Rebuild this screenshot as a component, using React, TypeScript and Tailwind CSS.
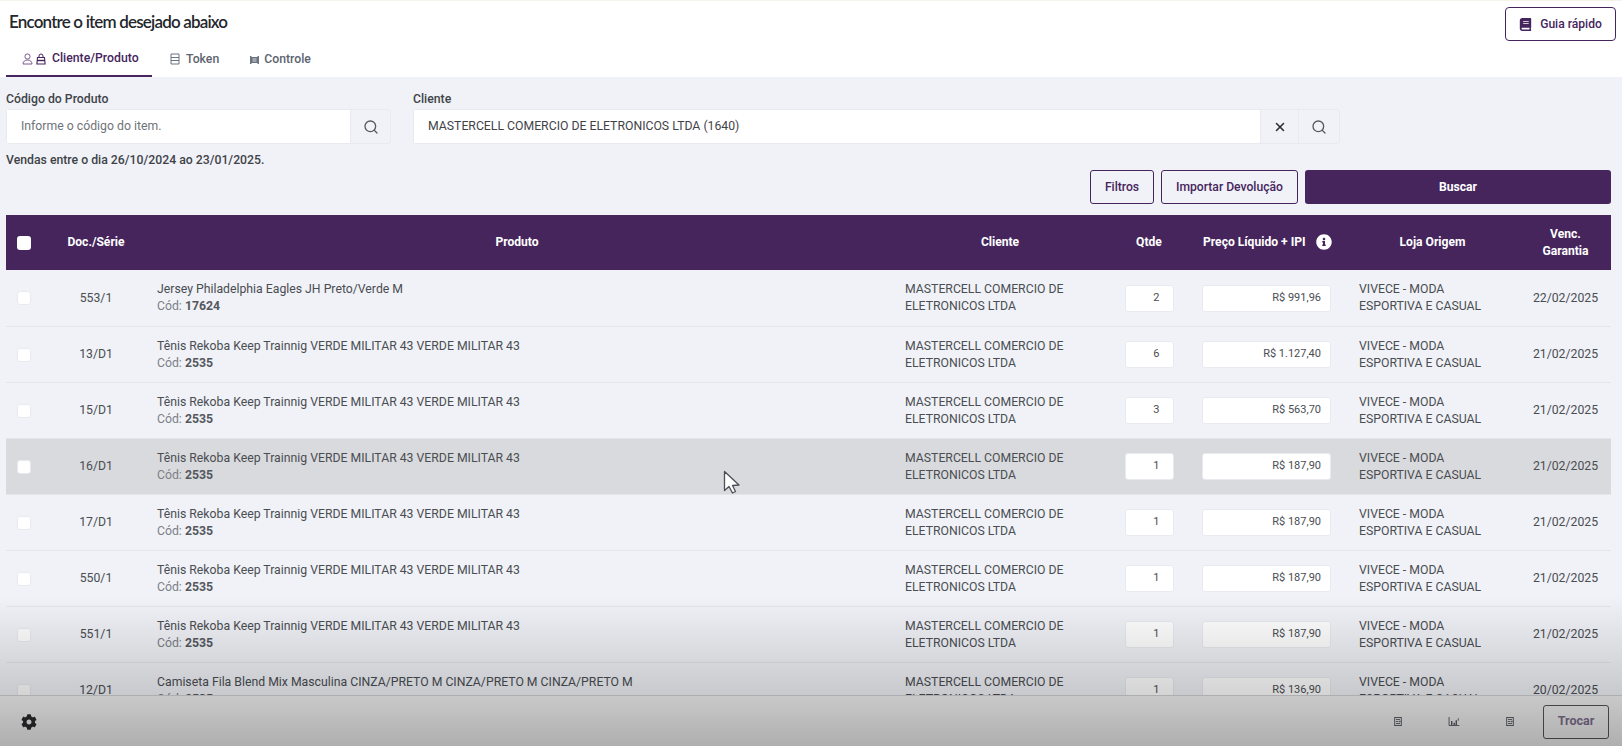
import { FaBook, FaCog, FaInfoCircle } from "react-icons/fa";
import { Search, X } from "lucide-react";

const cols = "grid grid-cols-[36px_108px_734px_232px_66px_168px_165px_96px] items-center";
const tenis = "Tênis Rekoba Keep Trainnig VERDE MILITAR 43 VERDE MILITAR 43";

const rows = [
  { doc: "553/1", name: "Jersey Philadelphia Eagles JH Preto/Verde M", cod: "17624", q: "2", price: "R$ 991,96", date: "22/02/2025" },
  { doc: "13/D1", name: tenis, cod: "2535", q: "6", price: "R$ 1.127,40", date: "21/02/2025" },
  { doc: "15/D1", name: tenis, cod: "2535", q: "3", price: "R$ 563,70", date: "21/02/2025" },
  { doc: "16/D1", name: tenis, cod: "2535", q: "1", price: "R$ 187,90", date: "21/02/2025", hover: true },
  { doc: "17/D1", name: tenis, cod: "2535", q: "1", price: "R$ 187,90", date: "21/02/2025" },
  { doc: "550/1", name: tenis, cod: "2535", q: "1", price: "R$ 187,90", date: "21/02/2025" },
  { doc: "551/1", name: tenis, cod: "2535", q: "1", price: "R$ 187,90", date: "21/02/2025" },
  { doc: "12/D1", name: "Camiseta Fila Blend Mix Masculina CINZA/PRETO M CINZA/PRETO M CINZA/PRETO M", cod: "2535", q: "1", price: "R$ 136,90", date: "20/02/2025" },
];

function UserBagIcon() {
  return (
    <svg width="24" height="12" viewBox="0 0 24 12" fill="none" className="shrink-0">
      <circle cx="5.5" cy="3.5" r="2.6" stroke="#7b5a94" strokeWidth="1" />
      <path d="M1 11c0-2.6 2-4 4.500-4S10 8.400 10 11z" stroke="#7b5a94" strokeWidth="1" />
      <path d="M15.500 4.500h7l.6 6.500h-8.200z" stroke="#46255d" strokeWidth="1.100" fill="#ffffff" />
      <path d="M17 5V3a2 2 0 0 1 4 0v2" stroke="#46255d" strokeWidth="1" />
      <path d="M15 7.500h8" stroke="#46255d" strokeWidth="1.400" />
    </svg>
  );
}

function ListIcon() {
  return (
    <svg width="10" height="12" viewBox="0 0 10 12" fill="none" className="shrink-0">
      <path d="M1 1h8M1 1v10h8V1M1 4.500h8M1 7.500h8" stroke="#6b7280" strokeWidth="1" />
    </svg>
  );
}

function ControlIcon() {
  return (
    <svg width="9" height="9" viewBox="0 0 9 9" className="shrink-0">
      <path d="M0 1h1.500v1H7.500V1H9v8H7.500V8h-6v1H0z" fill="#6b7280" />
      <rect x="2.500" y="3" width="4" height="4" fill="#a3a8b0" />
    </svg>
  );
}

function DocMini() {
  return (
    <svg width="8" height="9" viewBox="0 0 9 11" fill="none">
      <rect x="0.500" y="0.500" width="8" height="10" stroke="#3f444b" strokeWidth="1" />
      <path d="M2 3h5M2 5.500h3M2 8h5" stroke="#3f444b" strokeWidth="1" />
      <path d="M6 4.500h1.500v2H6z" fill="#3f444b" />
    </svg>
  );
}

function ChartMini() {
  return (
    <svg width="12" height="9" viewBox="0 0 13 11" fill="none">
      <path d="M0.500 0v10.500H13" stroke="#3f444b" strokeWidth="1" />
      <path d="M3 5h1.500v5H3zM6 7h1.500v3H6zM8.500 4H10v6H8.500z" fill="#3f444b" />
      <path d="M11 1.500h1.500v3H11z" fill="#7c828b" />
    </svg>
  );
}

function Cursor() {
  return (
    <svg width="18" height="24" viewBox="0 0 18 24" className="absolute left-[723px] top-[470px] z-20">
      <path d="M1.500 1.500v19l4.500-4 3.500 6.500 3-1.500-3-6 6.500-.5z" fill="#ffffff" stroke="#4b4f57" strokeWidth="1.300" strokeLinejoin="round" />
    </svg>
  );
}

export default function App() {
  return (
    <div className="relative h-screen w-full flex flex-col overflow-hidden bg-[#f0f2f7] font-['Roboto',sans-serif] text-[12.25px] text-[#4a4d52]">
      <header className="h-[77px] shrink-0 bg-white border-t border-[#f6f3ea] flex justify-between pl-[6px] pr-[6px]">
        <div className="flex flex-col">
          <h1 className="ml-[3px] mt-[9px] h-[24px] leading-[24px] font-['Lato',sans-serif] font-semibold text-[17px] tracking-[-0.82px] whitespace-nowrap text-[#24272c]">
            Encontre o item desejado abaixo
          </h1>
          <nav className="mt-[8px] flex h-[35px] text-[12.25px] font-medium">
            <div className="w-[146px] h-[35px] flex items-center pl-[16px] gap-[6px] border-b-2 border-[#46255d] text-[#46255d]">
              <UserBagIcon />
              <span>Cliente/Produto</span>
            </div>
            <div className="ml-[18px] flex items-center gap-[6px] text-[#5c6470] pb-[1px]">
              <ListIcon />
              <span>Token</span>
            </div>
            <div className="ml-[31px] flex items-center gap-[5px] text-[#5c6470] pb-[1px]">
              <ControlIcon />
              <span>Controle</span>
            </div>
          </nav>
        </div>
        <button className="mt-[6px] w-[111px] h-[34px] flex items-center justify-center gap-[8px] bg-white border border-[#46255d] rounded-[4px] text-[12.1px] font-medium text-[#46255d]">
          <FaBook className="text-[13px]" />
          <span>Guia rápido</span>
        </button>
      </header>

      <section className="shrink-0 px-[6px] pr-[11px] pt-[14px]">
        <div className="flex gap-[22px]">
          <div className="w-[385px]">
            <label className="block h-[17px] leading-[17px] mb-[1px] font-medium text-[#3f4348]">Código do Produto</label>
            <div className="flex h-[35px] rounded-[3px] border border-[#e8eaef]">
              <div className="flex-1 bg-white px-[14px] flex items-center text-[#6f7479]">Informe o código do item.</div>
              <div className="w-[40px] flex items-center justify-center border-l border-[#e8eaef] text-[#555a60]">
                <Search size={16} strokeWidth={2} />
              </div>
            </div>
          </div>
          <div className="w-[927px]">
            <label className="block h-[17px] leading-[17px] mb-[1px] font-medium text-[#3f4348]">Cliente</label>
            <div className="flex h-[35px] rounded-[3px] border border-[#e8eaef]">
              <div className="flex-1 bg-white px-[14px] flex items-center text-[#3f4348]">MASTERCELL COMERCIO DE ELETRONICOS LTDA (1640)</div>
              <div className="w-[38px] flex items-center justify-center border-l border-[#e8eaef] text-[#2b2e33]">
                <X size={14} strokeWidth={2.6} />
              </div>
              <div className="w-[41px] flex items-center justify-center border-l border-[#e8eaef] text-[#555a60]">
                <Search size={16} strokeWidth={2} />
              </div>
            </div>
          </div>
        </div>
        <p className="mt-[7px] mb-[1px] h-[18px] leading-[18px] font-medium text-[#3f4348]">Vendas entre o dia 26/10/2024 ao 23/01/2025.</p>
        <div className="flex justify-end gap-[7px] h-[34px] text-[12.15px]">
          <button className="w-[64px] border border-[#46255d] rounded-[3px] font-medium text-[#46255d]">Filtros</button>
          <button className="w-[137px] border border-[#46255d] rounded-[3px] font-medium text-[#46255d]">Importar Devolução</button>
          <button className="w-[306px] bg-[#46255d] rounded-[3px] font-bold text-white">Buscar</button>
        </div>
      </section>

      <main className="flex-1 min-h-0 overflow-hidden mt-[11px] ml-[6px] mr-[11px]">
        <div className={`${cols} h-[55px] mb-[1px] bg-[#46255d] text-white font-bold text-center text-[12.1px]`}>
          <div className="flex justify-center">
            <span className="w-[14px] h-[14px] rounded-[3px] bg-white" />
          </div>
          <div>Doc./Série</div>
          <div>Produto</div>
          <div>Cliente</div>
          <div>Qtde</div>
          <div className="flex items-center gap-[10px] pl-[21px]">
            <span className="whitespace-nowrap">Preço Líquido + IPI</span>
            <FaInfoCircle className="shrink-0 text-[16px]" />
          </div>
          <div>Loja Origem</div>
          <div className="leading-[17px] pl-[5px]">Venc.<br />Garantia</div>
        </div>
        {rows.map((r, i) => (
          <div key={r.doc} className={`${cols} h-[56px] border-b border-[#e3e5ea] ${i === 0 ? "pb-[2px]" : ""} ${r.hover ? "bg-[#d9dadd]" : ""}`}>
            <div className="flex justify-center">
              <span className="w-[14px] h-[14px] rounded-[3px] bg-white border border-[#e8eaef]" />
            </div>
            <div className={`text-center ${i === 0 ? "pt-[2px]" : ""}`}>{r.doc}</div>
            <div className="pl-[7px] leading-[17px]">
              <div>{r.name}</div>
              <div className="text-[#7c8086]">Cód: <b className="font-bold text-[#55585d]">{r.cod}</b></div>
            </div>
            <div className="pl-[21px] leading-[17px]">MASTERCELL COMERCIO DE<br />ELETRONICOS LTDA</div>
            <div className={`flex justify-center ${i === 0 ? "pt-[2px]" : ""}`}>
              <div className="w-[49px] h-[27px] bg-white border border-[#e8eaef] rounded-[3px] flex items-center justify-end pr-[13px] text-[11px]">{r.q}</div>
            </div>
            <div className={`pl-[20px] ${i === 0 ? "pt-[2px]" : ""}`}>
              <div className="w-[129px] h-[27px] bg-white border border-[#e8eaef] rounded-[3px] flex items-center justify-end pr-[9px] text-[11px]">{r.price}</div>
            </div>
            <div className="pl-[9px] leading-[17px]">VIVECE - MODA<br />ESPORTIVA E CASUAL</div>
            <div className={`text-center pl-[5px] ${i === 0 ? "pt-[2px]" : ""}`}>{r.date}</div>
          </div>
        ))}
      </main>

      <footer className="relative z-10 shrink-0 h-[51px] bg-[#f2f2f2] flex items-center pl-[21px] pr-[13px] pt-[1px] border-t border-[#d0d1d4]">
        <FaCog size={16} className="text-[#2a2a2d]" />
        <div className="ml-auto flex items-center">
          <DocMini />
          <div className="ml-[46px]"><ChartMini /></div>
          <div className="ml-[46px]"><DocMini /></div>
          <button className="ml-[29px] w-[66px] h-[34px] border border-[#555] rounded-[3px] font-bold text-[#7d6f8f] text-[12.5px]">Trocar</button>
        </div>
      </footer>

      <div className="absolute left-0 right-0 bottom-0 h-[150px] z-10 pointer-events-none bg-[linear-gradient(to_bottom,rgba(0,0,0,0)_0%,rgba(0,0,0,0.17)_66%,rgba(0,0,0,0.28)_100%)]" />
      <Cursor />
    </div>
  );
}
